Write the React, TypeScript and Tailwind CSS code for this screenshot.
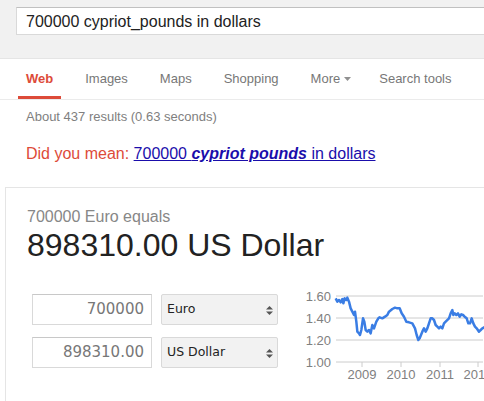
import React from 'react'

// Rate trace read off the chart (3x crop coords, origin 290,285)
const trace: [number, number][] = [
  [140, 40], [145, 50], [150, 45], [155, 52], [160, 42], [163, 55], [167, 40], [172, 45], [175, 38],
  [180, 50], [185, 70], [190, 80], [195, 90], [198, 80], [202, 110], [205, 140], [210, 145], [213, 150],
  [217, 135], [222, 100], [226, 110], [230, 135], [235, 140], [240, 135], [245, 145], [250, 120],
  [255, 130], [262, 110], [268, 100], [272, 97], [280, 100], [288, 95], [295, 90], [300, 80], [310, 72],
  [318, 68], [325, 70], [332, 70], [338, 85], [345, 95], [352, 110], [360, 112], [370, 115], [378, 130],
  [383, 150], [388, 165], [392, 160], [396, 150], [400, 140], [405, 130], [410, 140], [415, 130],
  [420, 115], [425, 100], [430, 100], [435, 105], [440, 120], [445, 125], [450, 130], [455, 125],
  [460, 130], [465, 115], [470, 110], [480, 100], [485, 85], [490, 75], [493, 90], [497, 85], [502, 90],
  [507, 85], [512, 95], [517, 88], [522, 90], [527, 95], [533, 100], [538, 115], [543, 115], [548, 100],
  [553, 115], [558, 125], [563, 130], [570, 140], [575, 135], [580, 130], [590, 125],
]

const points = trace.map(([x, y]) => `${290 + x / 3},${285 + y / 3}`).join(' ')

const tabs = ['Web', 'Images', 'Maps', 'Shopping', 'More', 'Search tools']

const Arrows = () => (
  <svg width="7" height="9" viewBox="0 0 7 9" className="absolute right-[4px] top-[11px]">
    <path d="M3.5 0 L7 3.5 L0 3.5 Z" fill="#555" />
    <path d="M0 5.5 L7 5.5 L3.5 9 Z" fill="#555" />
  </svg>
)

const Chart = () => (
  <svg width="194" height="92" viewBox="290 294 194 92" className="overflow-visible">
    {[
      { y: 296, t: '1.60' },
      { y: 318, t: '1.40' },
      { y: 340, t: '1.20' },
      { y: 362, t: '1.00' },
    ].map((g) => (
      <g key={g.t}>
        <line x1="337" x2="484" y1={g.y} y2={g.y} stroke="#cccccc" strokeWidth="1" />
        <text x="332" y={g.y + 5} textAnchor="end" fontSize="13" fill="#808080" fontFamily="'Liberation Sans', Arial, sans-serif">
          {g.t}
        </text>
      </g>
    ))}
    {[
      { x: 363, t: '2009' },
      { x: 402, t: '2010' },
      { x: 441, t: '2011' },
      { x: 479, t: '2012' },
    ].map((g) => (
      <g key={g.t}>
        <line x1={g.x} x2={g.x} y1="362" y2="367" stroke="#cccccc" strokeWidth="1" />
        <text x={g.x} y="379" textAnchor="middle" fontSize="13" fill="#808080" fontFamily="'Liberation Sans', Arial, sans-serif">
          {g.t}
        </text>
      </g>
    ))}
    <polyline points={points} fill="none" stroke="#3a7de4" strokeWidth="2.5" strokeLinejoin="round" />
  </svg>
)

export default function App() {
  return (
    <div className="w-[484px] h-[401px] overflow-hidden bg-white font-['Liberation_Sans',Arial,sans-serif] text-[#222]">
      {/* Search header */}
      <div className="h-[59px] bg-[#f1f1f1] border-b border-[#e5e5e5] pt-[7px] pl-4">
        <div className="h-[28px] w-[620px] bg-white border border-[#d9d9d9] border-t-[#c0c0c0] pl-[9px] pt-px flex items-center text-[16px] text-[#222]">
          700000 cypriot_pounds in dollars
        </div>
      </div>

      {/* Tabs */}
      <div className="h-[41px] border-b border-[#ebebeb] flex gap-4 pl-[18px]">
        {tabs.map((t) => (
          <div
            key={t}
            className={
              'pl-2 pt-[2px] flex items-center gap-[4px] text-[13px] border-b-[3px] ' +
              (t === 'More' ? 'pr-1 ' : 'pr-2 ') +
              (t === 'Web' ? 'border-[#dd4b39] text-[#dd4b39] font-bold' : 'border-transparent text-[#777]')
            }
          >
            {t}
            {t === 'More' && (
              <svg width="7" height="4" viewBox="0 0 7 4" className="mt-[1px]">
                <path d="M0 0 L7 0 L3.5 4 Z" fill="#909090" />
              </svg>
            )}
          </div>
        ))}
      </div>

      <div className="mt-[9px] pl-[26px] text-[13px] leading-[15px] text-[#808080]">
        About 437 results (0.63 seconds)
      </div>

      <div className="mt-[21px] pl-[26px] text-[16px] leading-[18px]">
        <span className="text-[#dd4b39]">Did you mean: </span>
        <a className="text-[#1a0dab] underline">
          700000 <b className="italic">cypriot pounds</b> in dollars
        </a>
      </div>

      {/* Converter card */}
      <div className="mt-[24px] ml-[5px] border-t border-l border-[#e5e5e5] pt-[20px] pl-[21px] pb-[40px]">
        <div className="text-[16px] leading-[18px] text-[#878787]">700000 Euro equals</div>
        <div className="mt-px text-[32px] leading-[36px] text-[#222]">898310.00 US Dollar</div>

        <div className="mt-[31px] flex items-start">
          <div className="ml-[5px] grid grid-cols-[120px_117px] gap-x-[9px] gap-y-[12px] font-['DejaVu_Sans',sans-serif]">
            <div className="h-[31px] border border-[#d9d9d9] border-t-[#c8c8c8] pr-[7px] flex items-center justify-end text-[15px] text-[#777]">
              700000
            </div>
            <div className="relative h-[31px] border border-[#d9d9d9] rounded-[2px] bg-[#f2f2f2] pl-[5px] flex items-center text-[12.5px] text-[#222]">
              Euro
              <Arrows />
            </div>
            <div className="h-[31px] border border-[#d9d9d9] border-t-[#c8c8c8] pr-[7px] flex items-center justify-end text-[15px] text-[#777]">
              898310.00
            </div>
            <div className="relative h-[31px] border border-[#d9d9d9] rounded-[2px] bg-[#f2f2f2] pl-[5px] flex items-center text-[12.5px] text-[#222]">
              US Dollar
              <Arrows />
            </div>
          </div>
          <div className="ml-[11px]">
            <Chart />
          </div>
        </div>
      </div>
    </div>
  )
}
